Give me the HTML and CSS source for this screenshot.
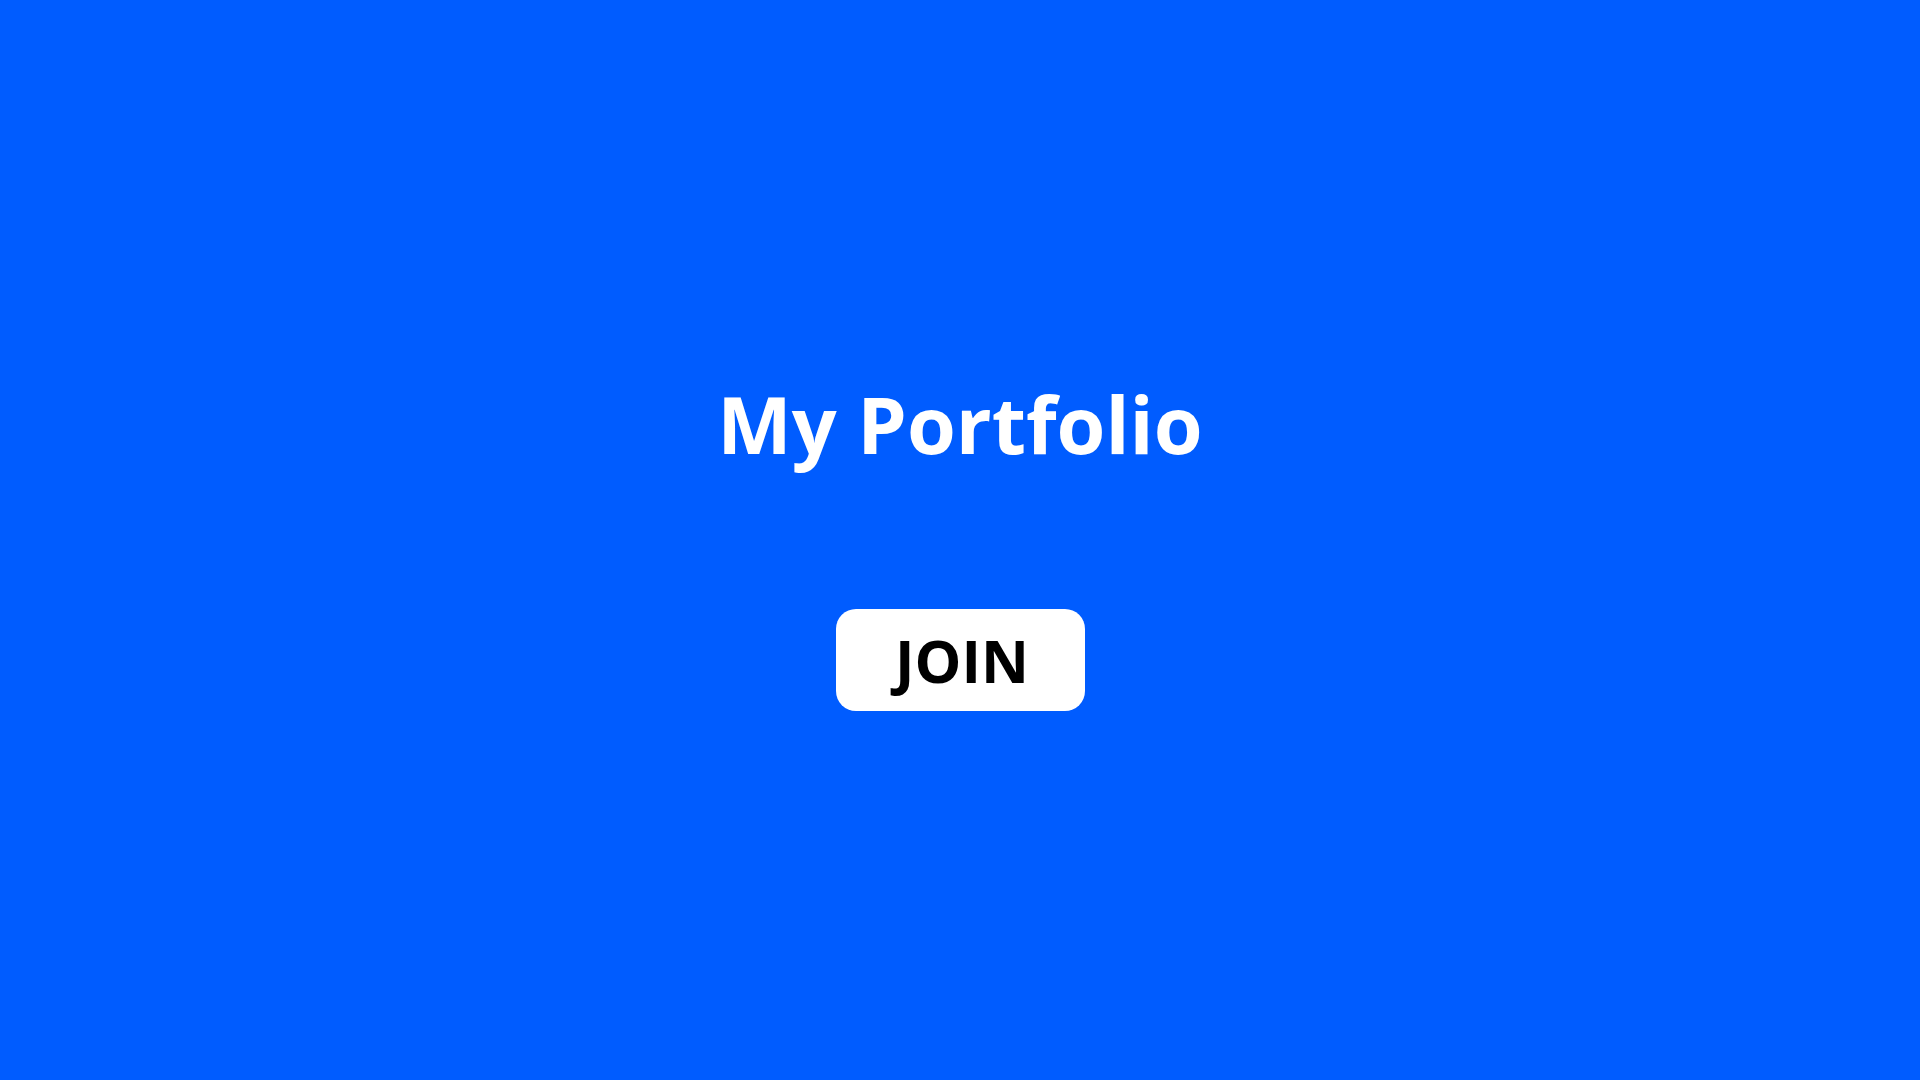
FILE: index.html
```html
<!DOCTYPE html>
<html lang="en">
<head>
<meta charset="utf-8">
<title>My Portfolio</title>
<link rel="stylesheet" href="styles.css">
</head>
<body>
<main class="hero">
  <h1 class="title">My Portfolio</h1>
  <button class="join">JOIN</button>
</main>
</body>
</html>
```
FILE: styles.css
```css
html, body {
  margin: 0;
  padding: 0;
  height: 100%;
}
body {
  background: #005cff;
  font-family: "Open Sans", "Noto Sans", sans-serif;
}
.hero {
  height: 100%;
  display: flex;
  flex-direction: column;
  align-items: center;
  justify-content: center;
}
.title {
  margin: 0;
  padding-top: 4px;
  color: #ffffff;
  font-size: 79px;
  font-weight: 700;
  line-height: 100px;
}
.join {
  margin-top: 135px;
  width: 249px;
  height: 102px;
  border: none;
  border-radius: 20px;
  background: #ffffff;
  color: #000000;
  font-family: "Open Sans", "Noto Sans", sans-serif;
  font-size: 59px;
  font-weight: 700;
  padding: 0 0 0 4px;
}
```
